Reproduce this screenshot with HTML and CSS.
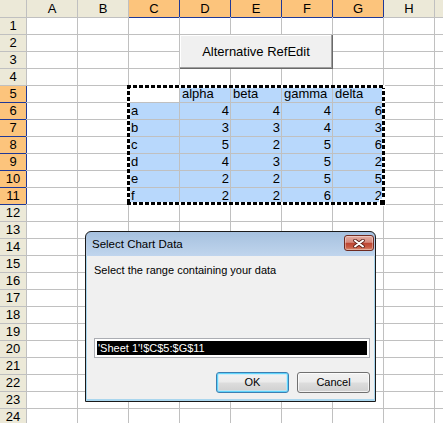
FILE: index.html
```html
<!DOCTYPE html>
<html>
<head>
<meta charset="utf-8">
<title>Alternative RefEdit</title>
<link rel="stylesheet" href="styles.css">
</head>
<body>
<div class="app">
  <div class="sheet">
    <div class="hd"></div><div class="hd">A</div><div class="hd">B</div><div class="hd sel">C</div><div class="hd sel">D</div><div class="hd sel">E</div><div class="hd sel">F</div><div class="hd sel">G</div><div class="hd">H</div><div class="hd"></div>
    <div class="rh">1</div><div class="c"></div><div class="c"></div><div class="c"></div><div class="c"></div><div class="c"></div><div class="c"></div><div class="c"></div><div class="c"></div><div class="c"></div>
    <div class="rh">2</div><div class="c"></div><div class="c"></div><div class="c"></div><div class="c"></div><div class="c"></div><div class="c"></div><div class="c"></div><div class="c"></div><div class="c"></div>
    <div class="rh">3</div><div class="c"></div><div class="c"></div><div class="c"></div><div class="c"></div><div class="c"></div><div class="c"></div><div class="c"></div><div class="c"></div><div class="c"></div>
    <div class="rh">4</div><div class="c"></div><div class="c"></div><div class="c"></div><div class="c"></div><div class="c"></div><div class="c"></div><div class="c"></div><div class="c"></div><div class="c"></div>
    <div class="rh sel">5</div><div class="c"></div><div class="c"></div><div class="c"></div><div class="c s">alpha</div><div class="c s">beta</div><div class="c s">gamma</div><div class="c s">delta</div><div class="c"></div><div class="c"></div>
    <div class="rh sel">6</div><div class="c"></div><div class="c"></div><div class="c s">a</div><div class="c s n">4</div><div class="c s n">4</div><div class="c s n">4</div><div class="c s n">6</div><div class="c"></div><div class="c"></div>
    <div class="rh sel">7</div><div class="c"></div><div class="c"></div><div class="c s">b</div><div class="c s n">3</div><div class="c s n">3</div><div class="c s n">4</div><div class="c s n">3</div><div class="c"></div><div class="c"></div>
    <div class="rh sel">8</div><div class="c"></div><div class="c"></div><div class="c s">c</div><div class="c s n">5</div><div class="c s n">2</div><div class="c s n">5</div><div class="c s n">6</div><div class="c"></div><div class="c"></div>
    <div class="rh sel">9</div><div class="c"></div><div class="c"></div><div class="c s">d</div><div class="c s n">4</div><div class="c s n">3</div><div class="c s n">5</div><div class="c s n">2</div><div class="c"></div><div class="c"></div>
    <div class="rh sel">10</div><div class="c"></div><div class="c"></div><div class="c s">e</div><div class="c s n">2</div><div class="c s n">2</div><div class="c s n">5</div><div class="c s n">5</div><div class="c"></div><div class="c"></div>
    <div class="rh sel">11</div><div class="c"></div><div class="c"></div><div class="c s">f</div><div class="c s n">2</div><div class="c s n">2</div><div class="c s n">6</div><div class="c s n">2</div><div class="c"></div><div class="c"></div>
    <div class="rh">12</div><div class="c"></div><div class="c"></div><div class="c"></div><div class="c"></div><div class="c"></div><div class="c"></div><div class="c"></div><div class="c"></div><div class="c"></div>
    <div class="rh">13</div><div class="c"></div><div class="c"></div><div class="c"></div><div class="c"></div><div class="c"></div><div class="c"></div><div class="c"></div><div class="c"></div><div class="c"></div>
    <div class="rh">14</div><div class="c"></div><div class="c"></div><div class="c"></div><div class="c"></div><div class="c"></div><div class="c"></div><div class="c"></div><div class="c"></div><div class="c"></div>
    <div class="rh">15</div><div class="c"></div><div class="c"></div><div class="c"></div><div class="c"></div><div class="c"></div><div class="c"></div><div class="c"></div><div class="c"></div><div class="c"></div>
    <div class="rh">16</div><div class="c"></div><div class="c"></div><div class="c"></div><div class="c"></div><div class="c"></div><div class="c"></div><div class="c"></div><div class="c"></div><div class="c"></div>
    <div class="rh">17</div><div class="c"></div><div class="c"></div><div class="c"></div><div class="c"></div><div class="c"></div><div class="c"></div><div class="c"></div><div class="c"></div><div class="c"></div>
    <div class="rh">18</div><div class="c"></div><div class="c"></div><div class="c"></div><div class="c"></div><div class="c"></div><div class="c"></div><div class="c"></div><div class="c"></div><div class="c"></div>
    <div class="rh">19</div><div class="c"></div><div class="c"></div><div class="c"></div><div class="c"></div><div class="c"></div><div class="c"></div><div class="c"></div><div class="c"></div><div class="c"></div>
    <div class="rh">20</div><div class="c"></div><div class="c"></div><div class="c"></div><div class="c"></div><div class="c"></div><div class="c"></div><div class="c"></div><div class="c"></div><div class="c"></div>
    <div class="rh">21</div><div class="c"></div><div class="c"></div><div class="c"></div><div class="c"></div><div class="c"></div><div class="c"></div><div class="c"></div><div class="c"></div><div class="c"></div>
    <div class="rh">22</div><div class="c"></div><div class="c"></div><div class="c"></div><div class="c"></div><div class="c"></div><div class="c"></div><div class="c"></div><div class="c"></div><div class="c"></div>
    <div class="rh">23</div><div class="c"></div><div class="c"></div><div class="c"></div><div class="c"></div><div class="c"></div><div class="c"></div><div class="c"></div><div class="c"></div><div class="c"></div>
    <div class="rh">24</div><div class="c"></div><div class="c"></div><div class="c"></div><div class="c"></div><div class="c"></div><div class="c"></div><div class="c"></div><div class="c"></div><div class="c"></div>
  </div>

  <button class="sheet-btn">Alternative RefEdit</button>
  <div class="ants"></div>

  <div class="dialog">
    <div class="titlebar">
      <span class="title">Select Chart Data</span>
      <span class="close">
        <svg width="12" height="9" viewBox="0 0 12 9">
          <path d="M2 1.5 L10 7.5 M10 1.5 L2 7.5" stroke="#5a2018" stroke-width="3.6" stroke-linecap="round" fill="none"/>
          <path d="M2 1.5 L10 7.5 M10 1.5 L2 7.5" stroke="#ffffff" stroke-width="2" stroke-linecap="round" fill="none"/>
        </svg>
      </span>
    </div>
    <div class="client">
      <p class="msg">Select the range containing your data</p>
      <div class="refedit"><div class="refsel">'Sheet 1'!$C$5:$G$11</div></div>
      <div class="actions">
        <span class="btn ok">OK</span>
        <span class="btn">Cancel</span>
      </div>
    </div>
  </div>
</div>
</body>
</html>
```

FILE: styles.css
```css
html, body {
  margin: 0;
  padding: 0;
  background: #ffffff;
}

.app {
  position: relative;
  width: 443px;
  height: 423px;
  overflow: hidden;
}

.sheet {
  display: grid;
  grid-template-columns: 26px repeat(9, 50px);
  grid-template-rows: 17px repeat(24, 16px);
  gap: 1px;
  background: #c0c0c0;
  width: max-content;
  font-family: "Liberation Sans", Arial, sans-serif;
  font-size: 13px;
  color: #000;
}

.hd {
  background: #ece9d8;
  text-align: center;
  line-height: 17px;
}

.rh {
  background: #ece9d8;
  text-align: center;
  line-height: 16px;
}

.hd.sel,
.rh.sel {
  background: #fcc47c;
  box-shadow: 1px 0 0 #1f3897, 0 1px 0 #1f3897;
}

.c {
  background: #ffffff;
  line-height: 16px;
  padding: 0 2px;
  white-space: nowrap;
  overflow: hidden;
}

.c.s {
  background: #b8d8fc;
}

.c.n {
  text-align: right;
  padding-right: 1px;
}

.sheet-btn {
  position: absolute;
  left: 180px;
  top: 35px;
  width: 153px;
  height: 34px;
  margin: 0;
  padding: 0;
  box-sizing: border-box;
  background: #f0f0f0;
  border: 0;
  border-right: 1px solid #696969;
  border-bottom: 1px solid #696969;
  box-shadow: inset -1px -1px 0 #a0a0a0, inset 1px 1px 0 #ffffff;
  font-family: "Liberation Sans", Arial, sans-serif;
  font-size: 13px;
  color: #000;
  text-align: center;
}

.ants {
  position: absolute;
  left: 127px;
  top: 85px;
  width: 258px;
  height: 120px;
  box-sizing: border-box;
  background:
    repeating-linear-gradient(90deg, #000 0 4px, #fff 4px 6px) left top / 100% 3px no-repeat,
    repeating-linear-gradient(90deg, #000 0 4px, #fff 4px 6px) left bottom / 100% 3px no-repeat,
    repeating-linear-gradient(180deg, #000 0 4px, #fff 4px 6px) left top / 3px 100% no-repeat,
    repeating-linear-gradient(180deg, #000 0 4px, #fff 4px 6px) right top / 3px 100% no-repeat;
}

.ants::after {
  content: "";
  position: absolute;
  right: -1px;
  bottom: -1px;
  width: 5px;
  height: 5px;
  background: #000;
  border: 1px solid #fff;
}

.dialog {
  position: absolute;
  left: 85px;
  top: 231px;
  width: 291px;
  height: 171px;
  box-sizing: border-box;
  border: 1px solid #1a1a1a;
  border-radius: 6px 6px 0 0;
  background: linear-gradient(#a6c1df, #c0d5ed 24px, #b9d3ec);
  display: flex;
  flex-direction: column;
  overflow: hidden;
  font-family: "Liberation Sans", Arial, sans-serif;
  font-size: 11px;
  color: #000;
}

.titlebar {
  height: 24px;
  flex: none;
  display: flex;
  align-items: flex-start;
  padding-left: 6px;
}

.title {
  line-height: 24px;
  font-size: 11.5px;
}

.close {
  margin-left: auto;
  margin-right: 1px;
  margin-top: 3px;
  width: 30px;
  height: 16px;
  box-sizing: border-box;
  border: 1px solid #6e2a20;
  border-radius: 3px;
  background: linear-gradient(#e3aca2 0%, #d58a7d 45%, #bd4532 52%, #c85c45 80%, #d98e74 100%);
  box-shadow: inset 0 0 0 1px rgba(255, 255, 255, 0.35);
  display: flex;
  align-items: center;
  justify-content: center;
}

.close svg {
  display: block;
}

.client {
  flex: 1;
  background: #f0f0f0;
  border: 1px solid #a9d6ee;
  border-top: 0;
  border-bottom-width: 2px;
  padding: 6px 4px 0 7px;
  display: flex;
  flex-direction: column;
}

.msg {
  margin: 0;
  height: 16px;
  line-height: 16px;
}

.refedit {
  margin-top: 60px;
  height: 20px;
  box-sizing: border-box;
  border: 1px solid #abadb3;
  background: #ffffff;
  padding: 2px;
}

.refsel {
  height: 14px;
  line-height: 14px;
  background: #000;
  color: #fff;
  padding-left: 1px;
  white-space: nowrap;
}

.actions {
  margin-top: 14px;
  display: flex;
  justify-content: flex-end;
  gap: 8px;
}

.btn {
  width: 73px;
  height: 21px;
  box-sizing: border-box;
  border: 1px solid #707070;
  border-radius: 3px;
  background: linear-gradient(#f2f2f2 0%, #ebebeb 48%, #dddddd 52%, #cfcfcf 100%);
  box-shadow: inset 0 0 0 1px rgba(255, 255, 255, 0.7);
  text-align: center;
  line-height: 19px;
}

.btn.ok {
  border-color: #3c7fb1;
  box-shadow: inset 0 0 0 1px #5fd4fc, inset 0 0 0 2px rgba(180, 235, 255, 0.6);
}
```
